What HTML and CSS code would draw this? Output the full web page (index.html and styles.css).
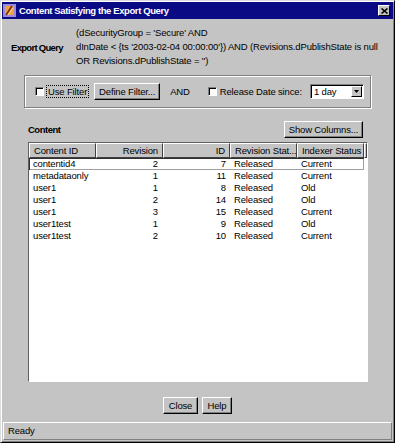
FILE: index.html
```html
<!DOCTYPE html>
<html>
<head>
<meta charset="utf-8">
<title>Content Satisfying the Export Query</title>
<link rel="stylesheet" href="styles.css">
</head>
<body>
<div class="window">
  <div class="titlebar">
    <svg class="app-icon" width="13" height="13" viewBox="0 0 13 13">
      <rect x="0" y="0" width="13" height="13" fill="#9a8ad8"/>
      <rect x="2" y="2" width="9" height="9" fill="#f0a040"/>
      <path d="M3 11 L9 2" stroke="#7a3010" stroke-width="1.6"/>
      <path d="M5 11 L10 4" stroke="#fce0a0" stroke-width="1"/>
    </svg>
    <span class="title">Content Satisfying the Export Query</span>
    <span class="close-box">
      <svg width="7" height="6" viewBox="0 0 7 6"><path d="M0.5 0.5 L6.5 5.5 M6.5 0.5 L0.5 5.5" stroke="#000" stroke-width="1.6"/></svg>
    </span>
  </div>

  <div class="query">
    <div class="query-label">Export Query</div>
    <div class="query-text">(dSecurityGroup = 'Secure' AND<br>dInDate &lt; {ts '2003-02-04 00:00:00'}) AND (Revisions.dPublishState is null<br>OR Revisions.dPublishState = '')</div>
  </div>

  <div class="filterbox">
    <span class="check"></span>
    <span class="focus-label">Use Filter</span>
    <span class="btn btn-define">Define Filter...</span>
    <span class="and">AND</span>
    <span class="check check2"></span>
    <span class="release">Release Date since:</span>
    <span class="combo"><span class="combo-text">1 day</span><span class="combo-arrow"><svg width="5" height="3" viewBox="0 0 5 3"><path d="M0 0 H5 L2.5 3 Z" fill="#000"/></svg></span></span>
  </div>

  <div class="content-row">
    <span class="section-label">Content</span>
    <span class="btn btn-show">Show Columns...</span>
  </div>

  <div class="table">
    <div class="thead">
      <span class="th">Content ID</span>
      <span class="th right">Revision</span>
      <span class="th right">ID</span>
      <span class="th">Revision Stat...</span>
      <span class="th">Indexer Status</span>
      <span class="th filler"></span>
    </div>
    <div class="tr focused"><span class="td">contentid4</span><span class="td right">2</span><span class="td right id">7</span><span class="td">Released</span><span class="td">Current</span></div>
    <div class="tr"><span class="td">metadataonly</span><span class="td right">1</span><span class="td right id">11</span><span class="td">Released</span><span class="td">Current</span></div>
    <div class="tr"><span class="td">user1</span><span class="td right">1</span><span class="td right id">8</span><span class="td">Released</span><span class="td">Old</span></div>
    <div class="tr"><span class="td">user1</span><span class="td right">2</span><span class="td right id">14</span><span class="td">Released</span><span class="td">Old</span></div>
    <div class="tr"><span class="td">user1</span><span class="td right">3</span><span class="td right id">15</span><span class="td">Released</span><span class="td">Current</span></div>
    <div class="tr"><span class="td">user1test</span><span class="td right">1</span><span class="td right id">9</span><span class="td">Released</span><span class="td">Old</span></div>
    <div class="tr"><span class="td">user1test</span><span class="td right">2</span><span class="td right id">10</span><span class="td">Released</span><span class="td">Current</span></div>
  </div>

  <div class="actions">
    <span class="btn btn-close">Close</span>
    <span class="btn btn-help">Help</span>
  </div>

  <div class="statusbar">Ready</div>
</div>
</body>
</html>
```

FILE: styles.css
```css
html, body {
  margin: 0;
  padding: 0;
  background: #c4c4c4;
}

body {
  font-family: "Liberation Sans", Arial, sans-serif;
  font-size: 9.5px;
  letter-spacing: -0.15px;
  color: #000;
}

.window {
  width: 395px;
  height: 443px;
  box-sizing: border-box;
  border: 1px solid;
  border-color: #dcdcdc #000 #000 #dcdcdc;
  box-shadow: inset 1px 1px 0 #fff, inset -1px -1px 0 #808080;
  padding: 1px;
  background: #c4c4c4;
  display: flex;
  flex-direction: column;
}

/* Title bar */
.titlebar {
  height: 17px;
  flex: none;
  background: #0a0a84;
  display: flex;
  align-items: center;
}

.app-icon {
  margin-left: 1px;
  flex: none;
}

.title {
  margin-left: 3px;
  color: #fff;
  font-weight: bold;
  letter-spacing: -0.4px;
  white-space: nowrap;
}

.close-box {
  margin-left: auto;
  margin-right: 3px;
  width: 12px;
  height: 11px;
  box-sizing: border-box;
  background: #c4c4c4;
  border: 1px solid;
  border-color: #fff #000 #000 #fff;
  display: flex;
  align-items: center;
  justify-content: center;
}

/* Query */
.query {
  margin-top: 7px;
  display: flex;
  align-items: center;
  flex: none;
}

.query-label {
  width: 74px;
  box-sizing: border-box;
  padding-left: 9px;
  font-weight: bold;
  letter-spacing: -0.7px;
  white-space: nowrap;
}

.query-text {
  line-height: 14px;
  white-space: nowrap;
}

/* Filter group */
.filterbox {
  margin: 7px 0 0 22px;
  width: 347px;
  height: 33px;
  box-sizing: border-box;
  border: 1px solid #808080;
  box-shadow: 1px 1px 0 #fff, inset 1px 1px 0 #fff;
  display: flex;
  align-items: center;
  padding-left: 10px;
  flex: none;
  white-space: nowrap;
}

.check {
  width: 9px;
  height: 9px;
  box-sizing: border-box;
  background: #fff;
  border: 1px solid;
  border-color: #808080 #fff #fff #808080;
  box-shadow: inset 1px 1px 0 #000;
  flex: none;
}

.focus-label {
  margin-left: 2px;
  line-height: 11px;
  border: 1px dotted #000;
  padding: 0 1px;
  flex: none;
}

.btn {
  display: inline-flex;
  align-items: center;
  justify-content: center;
  height: 17px;
  box-sizing: border-box;
  background: #c4c4c4;
  border: 1px solid;
  border-color: #fff #000 #000 #fff;
  box-shadow: inset -1px -1px 0 #808080;
  flex: none;
  white-space: nowrap;
}

.btn-define {
  margin-left: 5px;
  width: 66px;
}

.and {
  margin-left: 10px;
}

.check2 {
  margin-left: 18px;
}

.release {
  margin-left: 3px;
}

.combo {
  margin-left: 8px;
  width: 54px;
  height: 15px;
  box-sizing: border-box;
  background: #fff;
  border: 1px solid;
  border-color: #808080 #fff #fff #808080;
  box-shadow: inset 1px 1px 0 #000;
  display: flex;
  align-items: center;
  padding: 1px 1px 1px 3px;
}

.combo-text {
  flex: 1;
}

.combo-arrow {
  width: 11px;
  height: 11px;
  box-sizing: border-box;
  background: #c4c4c4;
  border: 1px solid;
  border-color: #fff #000 #000 #fff;
  display: flex;
  align-items: center;
  justify-content: center;
}

/* Content header */
.content-row {
  margin: 13px 0 0 26px;
  width: 335px;
  height: 17px;
  display: flex;
  align-items: center;
  justify-content: space-between;
  flex: none;
}

.section-label {
  font-weight: bold;
  letter-spacing: -0.5px;
}

.btn-show {
  width: 79px;
}

/* Table */
.table {
  margin: 4px 0 0 26px;
  width: 340px;
  height: 240px;
  box-sizing: border-box;
  border: 1px solid;
  border-color: #606060 #fff #fff #606060;
  background: #fff;
  flex: none;
}

.thead {
  display: flex;
  height: 15px;
  background: #c4c4c4;
}

.th {
  width: 67px;
  box-sizing: border-box;
  border: 1px solid;
  border-color: #fff #404040 #404040 #fff;
  padding: 0 4px;
  line-height: 13px;
  white-space: nowrap;
  overflow: hidden;
  flex: none;
}

.th.filler {
  flex: 1;
  width: auto;
  padding: 0;
}

.right {
  text-align: right;
}

.tr {
  display: flex;
  height: 12px;
  line-height: 12px;
  width: 335px;
}

.tr.focused {
  box-shadow: inset 1px 1px 0 #303030, inset -1px -1px 0 #a0a0a0;
}

.td {
  width: 67px;
  box-sizing: border-box;
  padding: 0 4px;
  white-space: nowrap;
  flex: none;
}

.td.right {
  padding-right: 5px;
}

.td.id {
  padding-right: 4px;
}

/* Bottom buttons */
.actions {
  margin-top: 15px;
  display: flex;
  justify-content: center;
  gap: 4px;
  flex: none;
}

.btn-close {
  width: 35px;
}

.btn-help {
  width: 30px;
}

.statusbar {
  margin: 8px 1px 0 1px;
  height: 18px;
  box-sizing: border-box;
  border: 1px solid;
  border-color: #fff #808080 #808080 #fff;
  padding-left: 4px;
  line-height: 16px;
  flex: none;
}
```
